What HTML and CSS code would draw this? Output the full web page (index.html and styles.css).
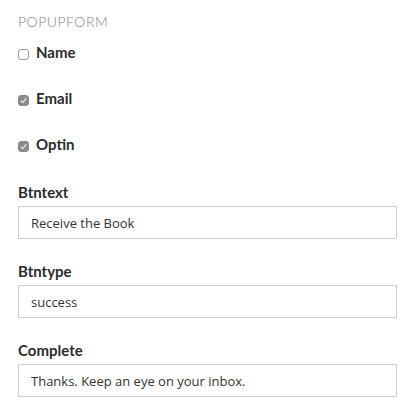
FILE: index.html
```html
<!DOCTYPE html>
<html lang="en">
<head>
  <meta charset="UTF-8" />
  <meta name="viewport" content="width=device-width, initial-scale=1" />
  <title>Popupform</title>
  <link rel="stylesheet" href="styles.css">
</head>
<body>
  <div class="panel">
    <h2 class="panel-title">Popupform</h2>

    <div class="checks">
      <label class="check-row">
        <input type="checkbox" />
        Name
      </label>
      <label class="check-row">
        <input type="checkbox" checked />
        Email
      </label>
      <label class="check-row">
        <input type="checkbox" checked />
        Optin
      </label>
    </div>

    <div class="field">
      <label for="btntext">Btntext</label>
      <input type="text" id="btntext" value="Receive the Book" />
    </div>
    <div class="field">
      <label for="btntype">Btntype</label>
      <input type="text" id="btntype" value="success" />
    </div>
    <div class="field">
      <label for="complete">Complete</label>
      <input type="text" id="complete" value="Thanks. Keep an eye on your inbox." />
    </div>
  </div>
</body>
</html>
```

FILE: styles.css
```css
* {
  box-sizing: border-box;
}
body {
  margin: 0;
  background: #fff;
  color: #333;
  font-family: Lato, 'Noto Sans', sans-serif;
}
.panel {
  padding: 12px 12px 0 18px;
}
.panel-title {
  margin: 0 0 10px;
  font-size: 14px;
  font-weight: 300;
  text-transform: uppercase;
  color: #858585;
  line-height: 20px;
  letter-spacing: 0.5px;
}
.checks {
  display: flex;
  flex-direction: column;
  gap: 26px;
  margin-bottom: 28px;
}
.check-row {
  display: flex;
  align-items: center;
  gap: 7px;
  height: 20px;
  font-size: 15px;
  font-weight: 700;
  color: #2b2b2b;
}
.check-row input {
  -webkit-appearance: none;
  appearance: none;
  flex: none;
  width: 11px;
  height: 11px;
  margin: 5px 0 0;
  border: 1px solid #9a9a9a;
  border-radius: 3px;
  background: #fff;
  position: relative;
}
.check-row input:checked {
  background: #8b8b8f;
  border-color: #8b8b8f;
}
.check-row input:checked::after {
  content: "";
  position: absolute;
  left: 3px;
  top: 1px;
  width: 2px;
  height: 5px;
  border: solid #fff;
  border-width: 0 1.5px 1.5px 0;
  transform: rotate(40deg);
}
.field {
  margin-bottom: 22px;
}
.field label {
  display: block;
  height: 20px;
  line-height: 20px;
  margin-bottom: 4px;
  font-size: 15px;
  font-weight: 700;
  color: #2b2b2b;
}
.field input {
  display: block;
  width: 379px;
  height: 33px;
  padding: 0 12px;
  border: 1px solid #cfcfcf;
  border-radius: 0;
  font-family: 'Open Sans', 'Noto Sans', sans-serif;
  font-size: 13px;
  color: #333;
  background: #fff;
  outline: none;
}
```
